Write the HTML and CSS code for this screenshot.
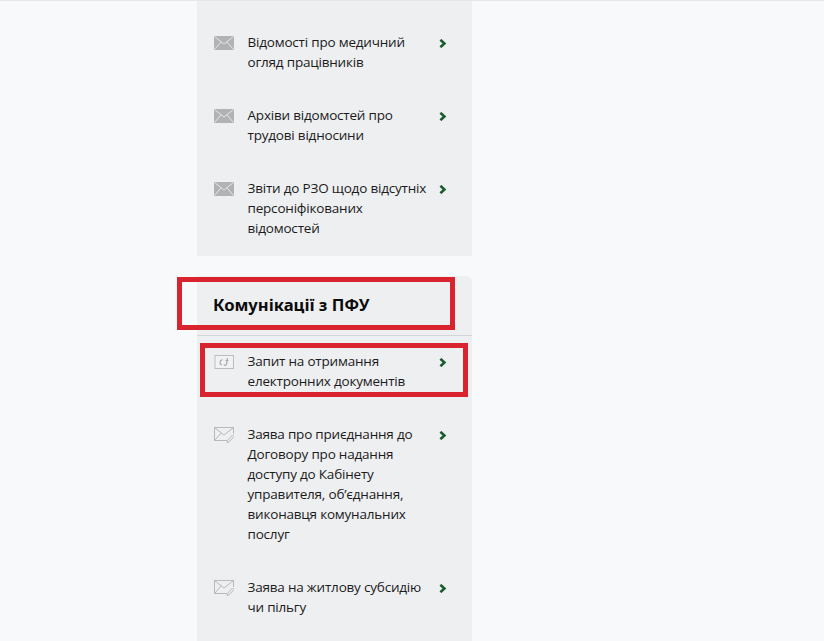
FILE: index.html
```html
<!DOCTYPE html>
<html lang="uk">
<head>
<meta charset="utf-8">
<title>Комунікації з ПФУ</title>
<link rel="stylesheet" href="styles.css">
</head>
<body>
<svg class="defs" width="0" height="0" aria-hidden="true">
  <symbol id="chev" viewBox="0 0 8 9"><path d="M1.4 0.8 L5.4 4.5 L1.4 8.2" fill="none" stroke="#1a5c2e" stroke-width="2.6"/></symbol>
  <symbol id="mail" viewBox="0 0 20 14"><rect width="20" height="14" fill="#b1b2b4"/><path d="M0.5 0.5 L10 8 L19.5 0.5 M0.5 13.5 L7 6 M19.5 13.5 L13 6" fill="none" stroke="#e6e7e9" stroke-width="1"/></symbol>
  <symbol id="doc" viewBox="0 0 20 14"><rect x="1" y="0.5" width="18.5" height="13" fill="#f1f2f3" stroke="#bcbdbf" stroke-width="1"/><path d="M8.5 5 C5.5 4.5 5 10 8 9.5 M13.5 3 L12.5 9 C12.2 10.8 10.6 10.8 10 9.6 M11.5 5.5 L14.5 5.5" fill="none" stroke="#a6a7a9" stroke-width="1.2"/></symbol>
  <symbol id="mailpen" viewBox="0 0 20 16"><path d="M0.5 0.5 H19.5 V7 M13 13.5 H0.5 V0.5 L10 8 L19.5 0.5 M0.5 13.5 L7 6 M18.5 8 L13.5 13.5 L13 15.5 L15 15 L20 9.5 Z" fill="none" stroke="#b8b9bb" stroke-width="1"/></symbol>
</svg>

<main class="column">
  <section class="card card-first">
    <ul class="list">
      <li class="item"><svg class="icon"><use href="#mail"/></svg><span class="label">Відомості про медичний огляд працівників</span><svg class="chev"><use href="#chev"/></svg></li>
      <li class="item"><svg class="icon"><use href="#mail"/></svg><span class="label">Архіви відомостей про трудові відносини</span><svg class="chev"><use href="#chev"/></svg></li>
      <li class="item"><svg class="icon"><use href="#mail"/></svg><span class="label">Звіти до РЗО щодо відсутніх персоніфікованих відомостей</span><svg class="chev"><use href="#chev"/></svg></li>
    </ul>
  </section>

  <section class="card card-second">
    <h2 class="title">Комунікації з ПФУ</h2>
    <ul class="list list-second">
      <li class="item"><svg class="icon"><use href="#doc"/></svg><span class="label">Запит на отримання електронних документів</span><svg class="chev"><use href="#chev"/></svg></li>
      <li class="item"><svg class="icon icon-tall"><use href="#mailpen"/></svg><span class="label">Заява про приєднання до Договору про надання доступу до Кабінету управителя, об’єднання, виконавця комунальних послуг</span><svg class="chev"><use href="#chev"/></svg></li>
      <li class="item"><svg class="icon icon-tall"><use href="#mailpen"/></svg><span class="label">Заява на житлову субсидію чи пільгу</span><svg class="chev"><use href="#chev"/></svg></li>
    </ul>
    <div class="mark mark-title"></div>
    <div class="mark mark-item"></div>
  </section>
</main>
</body>
</html>
```
FILE: styles.css
```css
html, body { margin: 0; padding: 0; height: 641px; overflow: hidden; }
body {
  background: #f8f9fa;
  border-top: 1px solid #e6e7e8;
  box-sizing: border-box;
  font-family: "Open Sans", "Noto Sans", sans-serif;
  color: #1b1b1b;
}
.defs { position: absolute; }
.column { width: 275px; margin-left: 197px; display: flex; flex-direction: column; gap: 20px; }
.card { background: #eeeff1; }
.card-first { padding: 31px 0 18px; }
.card-second { position: relative; border-top-right-radius: 6px; height: 365px; }
.list { list-style: none; margin: 0; padding: 0 0 0 17px; display: flex; flex-direction: column; gap: 33px; }
.list-second { padding-top: 15px; }
.item { display: flex; align-items: flex-start; font-size: 13.5px; letter-spacing: -0.2px; line-height: 20px; }
.icon { width: 20px; height: 14px; margin-top: 4px; margin-right: 13.5px; flex: none; }
.icon-tall { height: 16px; margin-top: 3px; }
.label { width: 181.5px; }
.chev { width: 8px; height: 9px; margin-top: 7px; margin-left: 10px; flex: none; }
.title {
  margin: 0;
  height: 60px;
  box-sizing: border-box;
  border-bottom: 1px solid #d3d5d8;
  padding: 17px 0 0 16px;
  font-family: "Noto Sans", sans-serif;
  font-size: 16.6px;
  line-height: 24px;
  font-weight: 700;
  color: #0c0c0c;
}
.mark { position: absolute; border: 5px solid #d9232e; box-sizing: border-box; }
.mark-title { left: -20px; top: 1px; width: 278px; height: 53px; }
.mark-item { left: 3px; top: 67px; width: 268px; height: 54px; }
```
